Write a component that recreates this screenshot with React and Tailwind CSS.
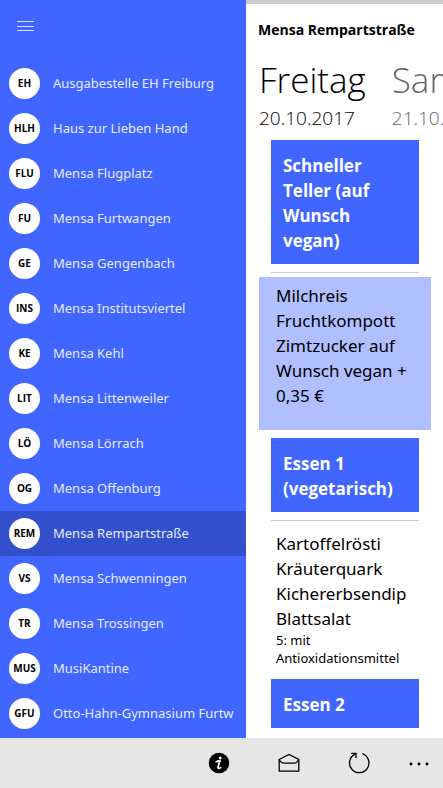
const canteens = [
  ["EH", "Ausgabestelle EH Freiburg"],
  ["HLH", "Haus zur Lieben Hand"],
  ["FLU", "Mensa Flugplatz"],
  ["FU", "Mensa Furtwangen"],
  ["GE", "Mensa Gengenbach"],
  ["INS", "Mensa Institutsviertel"],
  ["KE", "Mensa Kehl"],
  ["LIT", "Mensa Littenweiler"],
  ["LÖ", "Mensa Lörrach"],
  ["OG", "Mensa Offenburg"],
  ["REM", "Mensa Rempartstraße"],
  ["VS", "Mensa Schwenningen"],
  ["TR", "Mensa Trossingen"],
  ["MUS", "MusiKantine"],
  ["GFU", "Otto-Hahn-Gymnasium Furtwangen"],
];

const SELECTED = "REM";

function CanteenRow({ code, name }) {
  const active = code === SELECTED;
  return (
    <li>
      <button
        type="button"
        aria-current={active ? "true" : undefined}
        className={`flex h-[45px] w-full items-center gap-[13px] pr-3 pl-[9px] text-left ${active ? "bg-[#3350cc]" : ""}`}
      >
        <span className="flex size-[31px] shrink-0 items-center justify-center rounded-full bg-white text-[10px] font-bold text-black">
          {code}
        </span>
        <span className="min-w-0 flex-1 overflow-hidden font-['Noto_Sans','Open_Sans',sans-serif] text-[13px] whitespace-nowrap text-[#e6ebff]">
          {name}
        </span>
      </button>
    </li>
  );
}

function MealHeading({ children }) {
  return (
    <h2 className="mx-3 bg-[#4066ff] px-3 pt-[13px] pb-[11px] text-[17px] leading-[25px] font-bold text-white">
      {children}
    </h2>
  );
}

function Meal({ title, lines, note, highlighted }) {
  return (
    <section className="mb-2">
      <MealHeading>{title}</MealHeading>
      <hr className="mx-3 mt-2 mb-1 border-t border-[#cccccc]" />
      <div className={`pt-1.5 pb-1 pl-[17px] font-['Noto_Sans','Open_Sans',sans-serif] ${highlighted ? "bg-[#b0bfff]" : ""}`}>
        <p className="text-[17px] leading-[25px] whitespace-nowrap">
          {lines.map((line) => (
            <span key={line} className="block">{line}</span>
          ))}
        </p>
        <p className="min-h-[18px] text-[13px] leading-[18px]">{note}</p>
      </div>
    </section>
  );
}

function InfoIcon() {
  return (
    <svg width="22" height="22" viewBox="0 0 22 22" aria-hidden="true">
      <circle cx="11" cy="11" r="10.3" fill="#000" />
      <circle cx="12.2" cy="5.9" r="1.5" fill="#fff" />
      <path d="M8.2 9.900c1.300-.9 2.700-1.100 4-.8M11.600 9.200L10 15.200c-.3 1.300.8 1.600 2.700.4" fill="none" stroke="#fff" strokeWidth="1.700" strokeLinecap="round" />
    </svg>
  );
}

function MailIcon() {
  return (
    <svg width="22" height="22" viewBox="0 0 22 22" fill="none" stroke="#000" strokeWidth="1.300" aria-hidden="true">
      <path d="M1.200 7.500L11 2.500l9.800 5v11.700H1.200z" />
      <path d="M1.200 7.500c1.300 2.500 3 3.700 5 3.700h9.600c2 0 3.700-1.200 5-3.700" />
    </svg>
  );
}

function RefreshIcon() {
  return (
    <svg width="22" height="22" viewBox="0 0 22 22" fill="none" stroke="#000" strokeWidth="1.300" aria-hidden="true">
      <path d="M14.200 1.700A9.700 9.700 0 1 1 7.200 2.100" />
      <path d="M3.200 1.300h4.800v4.800" />
    </svg>
  );
}

function MoreIcon() {
  return (
    <svg width="22" height="22" viewBox="0 0 22 22" aria-hidden="true">
      <circle cx="3" cy="12" r="1.400" />
      <circle cx="11" cy="12" r="1.400" />
      <circle cx="19" cy="12" r="1.400" />
    </svg>
  );
}

export default function App() {
  return (
    <div className="flex h-screen flex-col bg-white font-['Open_Sans','Noto_Sans',sans-serif] text-black">
      <div className="flex min-h-0 flex-1">
        <nav aria-label="Mensen" className="w-[246px] shrink-0 overflow-hidden bg-[#4066ff]">
          <div className="flex h-[61px] items-start px-[17px] pt-[18px]">
            <button type="button" aria-label="Menü">
              <svg width="17" height="17" viewBox="0 0 17 17" stroke="#d9e1ff" strokeWidth="1" aria-hidden="true">
                <path d="M0 3.500h17M0 8.500h17M0 12.500h17" />
              </svg>
            </button>
          </div>
          <ul>
            {canteens.map(([code, name]) => (
              <CanteenRow key={code} code={code} name={name} />
            ))}
          </ul>
        </nav>

        <main className="min-w-0 flex-1 overflow-hidden border-t-4 border-[#cccccc]">
          <h1 className="px-3 pt-4 text-sm leading-5 font-bold whitespace-nowrap">Mensa Rempartstraße</h1>
          <div className="mt-4 flex gap-[26px] overflow-hidden pl-[13px] whitespace-nowrap">
            <button type="button" className="shrink-0 text-left">
              <span className="block text-[35px] leading-[48px] font-light">Freitag</span>
              <span className="block text-[19px] leading-7 font-light">20.10.2017</span>
            </button>
            <button type="button" className="shrink-0 text-left text-[#666666]">
              <span className="block text-[35px] leading-[48px] font-light">Samstag</span>
              <span className="block text-[19px] leading-7 font-light">21.10.2017</span>
            </button>
          </div>
          <div className="mt-2 pr-3 pl-[13px]">
            <Meal
              title="Schneller Teller (auf Wunsch vegan)"
              lines={["Milchreis", "Fruchtkompott", "Zimtzucker auf", "Wunsch vegan +", "0,35 €"]}
              highlighted
            />
            <Meal
              title="Essen 1 (vegetarisch)"
              lines={["Kartoffelrösti", "Kräuterquark", "Kichererbsendip", "Blattsalat"]}
              note="5: mit Antioxidationsmittel"
            />
            <MealHeading>Essen 2</MealHeading>
          </div>
        </main>
      </div>

      <footer className="flex h-[50px] shrink-0 items-center justify-end bg-[#e6e6e6] pr-[13px]">
        <button type="button" aria-label="Info" className="flex w-[70px] justify-end"><InfoIcon /></button>
        <button type="button" aria-label="Nachricht" className="flex w-[70px] justify-end"><MailIcon /></button>
        <button type="button" aria-label="Aktualisieren" className="flex w-[70px] justify-end"><RefreshIcon /></button>
        <button type="button" aria-label="Mehr" className="flex w-[60px] justify-end"><MoreIcon /></button>
      </footer>
    </div>
  );
}
